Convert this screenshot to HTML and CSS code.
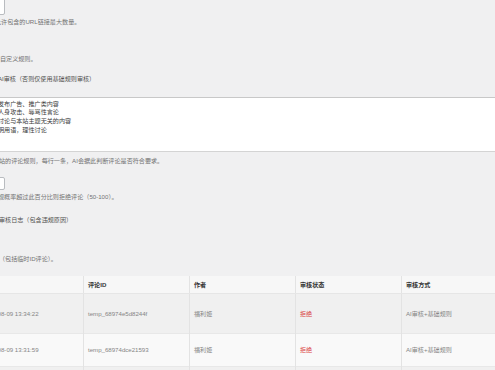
FILE: index.html
```html
<!DOCTYPE html>
<html lang="zh-CN">
<head>
<meta charset="utf-8">
<title>评论审核设置</title>
<link rel="stylesheet" href="styles.css">
</head>
<body>
<div class="page">
  <div class="stub stub-top"></div>
  <p class="desc d1">允许包含的URL链接最大数量。</p>
  <p class="desc d2">自定义规则。</p>
  <p class="label d3">AI审核（否则仅使用基础规则审核）</p>
  <div class="textarea">
    <div class="tl i1">发布广告、推广类内容</div>
    <div class="tl i1">人身攻击、辱骂性言论</div>
    <div class="tl i1">讨论与本站主题无关的内容</div>
    <div class="tl i1">明用语，理性讨论</div>
  </div>
  <p class="desc d4">站的评论规则，每行一条，AI会据此判断评论是否符合要求。</p>
  <div class="stub stub-mid"></div>
  <p class="desc d5">规概率超过此百分比则拒绝评论（50-100）。</p>
  <p class="label d6">审核日志（包含违规原因）</p>
  <p class="desc d7">（包括临时ID评论）。</p>
  <table class="log">
    <thead>
      <tr><th>时间</th><th>评论ID</th><th>作者</th><th>审核状态</th><th>审核方式</th></tr>
    </thead>
    <tbody>
      <tr class="r1"><td>2025-08-09 13:34:22</td><td>temp_68974e5d8244f</td><td>福利姬</td><td class="rej">拒绝</td><td>AI审核+基础规则</td></tr>
      <tr class="r2"><td>2025-08-09 13:31:59</td><td>temp_68974dce21593</td><td>福利姬</td><td class="rej">拒绝</td><td>AI审核+基础规则</td></tr>
      <tr class="r3"><td>2025-08-09 13:30:12</td><td>temp_68974d8c1a2b7</td><td>福利姬</td><td class="rej">拒绝</td><td>AI审核+基础规则</td></tr>
    </tbody>
  </table>
</div>
</body>
</html>
```
FILE: styles.css
```css
html, body {
  margin: 0;
  padding: 0;
  background: #f0f0f1;
}
.page {
  width: 495px;
  height: 370px;
  overflow: hidden;
  display: flex;
  flex-direction: column;
  font-family: "Liberation Sans", "Noto Sans CJK SC", sans-serif;
  font-size: 6.1px;
  color: #737373;
}
.page > * { flex-shrink: 0; }
p { margin: 0; }
.desc, .label {
  line-height: 8px;
  height: 8px;
  white-space: nowrap;
}
.label { color: #505050; }
.stub {
  background: #fff;
  border: 1px solid #b9bcc0;
  border-radius: 2px;
  width: 35px;
  margin-left: -30px;
  box-sizing: border-box;
}
.stub-top { height: 20px; margin-top: -5px; }
.stub-mid { height: 13px; margin-top: 12px; }
.d1 { margin-top: 3px; text-indent: -5px; }
.d2 { margin-top: 29px; text-indent: 0; }
.d3 { margin-top: 12px; text-indent: -2px; }
.textarea {
  margin-top: 14px;
  margin-left: -10px;
  width: 520px;
  height: 55px;
  box-sizing: border-box;
  background: #fff;
  border-top: 1px solid #c8c8c8;
  border-bottom: 1px solid #d4d4d4;
  padding: 1.6px 0 0 9px;
  color: #3c3c3c;
}
.tl { line-height: 8.7px; white-space: nowrap; }
.i1 { text-indent: -1px; }
.d4 { margin-top: 5px; text-indent: -1px; }
.d5 { margin-top: 3px; text-indent: -2px; }
.d6 { margin-top: 15px; text-indent: -1px; }
.d7 { margin-top: 31px; text-indent: -1px; }
.log {
  margin-top: 13px;
  margin-left: -23px;
  border-collapse: collapse;
  table-layout: fixed;
  width: 530px;
}
.log th, .log td {
  width: 106px;
  padding: 0 0 0 4px;
  text-align: left;
  white-space: nowrap;
  overflow: hidden;
  border-left: 1px solid #e3e3e3;
  box-sizing: border-box;
}
.log th {
  height: 17px;
  background: #f7f7f7;
  color: #333;
  font-weight: 600;
  border-bottom: 1px solid #e6e6e6;
}
.log td { color: #858585; }
.r1 td { height: 40px; background: #f0f0f0; }
.r2 td { height: 33px; background: #f9f9f9; border-top: 1px solid #e8e8e8; }
.r3 td { height: 33px; background: #f0f0f0; border-top: 1px solid #e8e8e8; }
.log td.rej { color: #d94545; }
```
